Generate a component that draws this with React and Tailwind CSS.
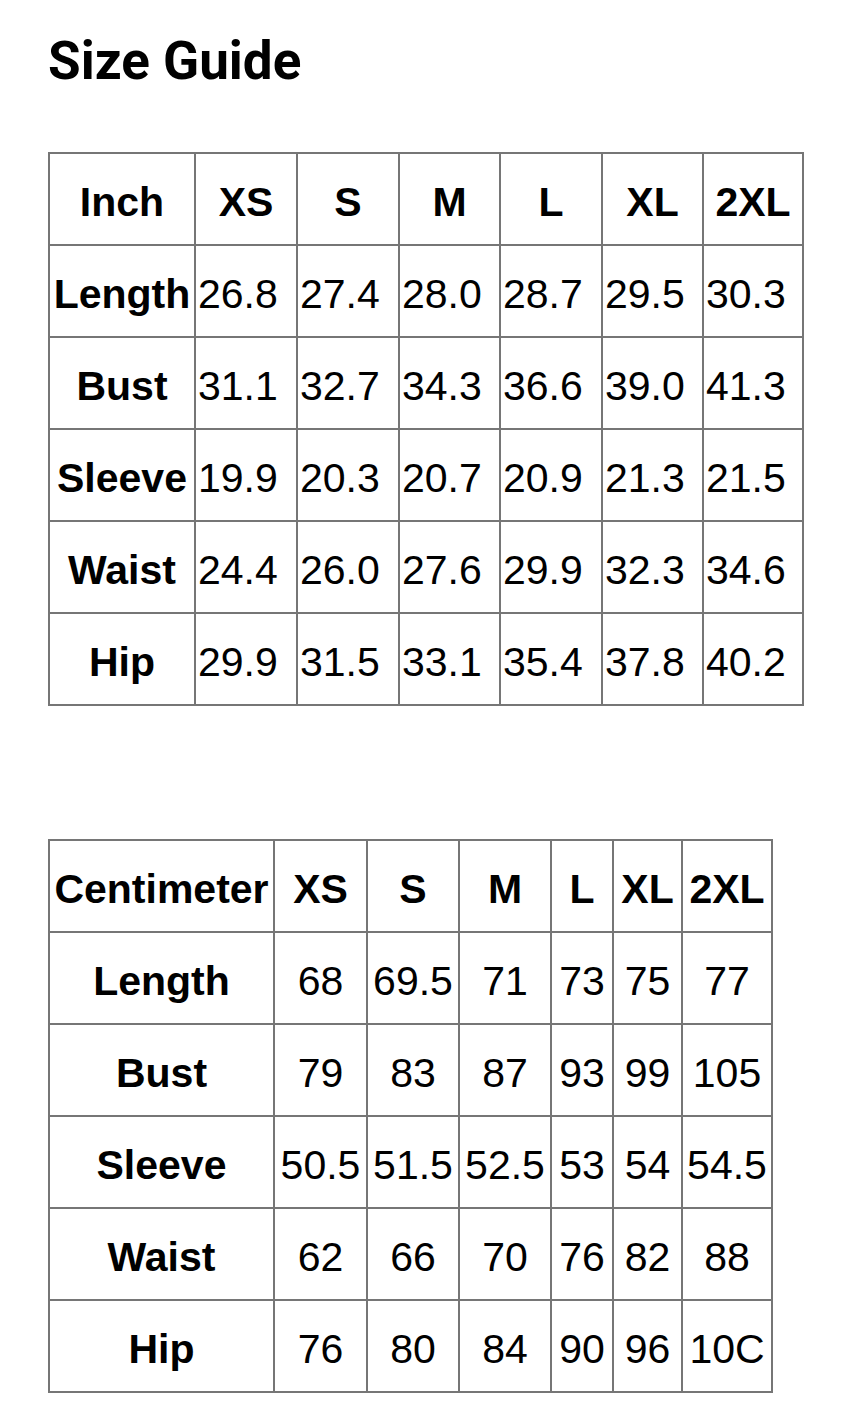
import React from 'react';

const inchSizes = ['XS', 'S', 'M', 'L', 'XL', '2XL'];
const inchRows = [
    ['Length', '26.8', '27.4', '28.0', '28.7', '29.5', '30.3'],
    ['Bust', '31.1', '32.7', '34.3', '36.6', '39.0', '41.3'],
    ['Sleeve', '19.9', '20.3', '20.7', '20.9', '21.3', '21.5'],
    ['Waist', '24.4', '26.0', '27.6', '29.9', '32.3', '34.6'],
    ['Hip', '29.9', '31.5', '33.1', '35.4', '37.8', '40.2'],
];

const cmRows = [
    ['Length', '68', '69.5', '71', '73', '75', '77'],
    ['Bust', '79', '83', '87', '93', '99', '105'],
    ['Sleeve', '50.5', '51.5', '52.5', '53', '54', '54.5'],
    ['Waist', '62', '66', '70', '76', '82', '88'],
    ['Hip', '76', '80', '84', '90', '96', '10C'],
];

const inchWidths = ['w-[146px]', 'w-[102px]', 'w-[102px]', 'w-[101px]', 'w-[102px]', 'w-[101px]', 'w-[100px]'];
const cmWidths = ['w-[225px]', 'w-[93px]', 'w-[92px]', 'w-[92px]', 'w-[62px]', 'w-[69px]', 'w-[90px]'];

const SizeTable = ({ unit, rows, widths, tableWidth, dataAlign }) => (
    <table className={`table-fixed border-separate border-spacing-0 border border-[#767676] ${tableWidth}`}>
        <thead>
            <tr className="h-[92px]">
                <th className={`border border-[#767676] p-0 pt-[6px] text-center font-bold ${widths[0]}`}>{unit}</th>
                {inchSizes.map((s, i) => (
                    <th key={s} className={`border border-[#767676] p-0 pt-[6px] text-center font-bold ${widths[i + 1]}`}>
                        {s}
                    </th>
                ))}
            </tr>
        </thead>
        <tbody>
            {rows.map((row) => (
                <tr key={row[0]} className="h-[92px]">
                    <th className="border border-[#767676] p-0 pt-[6px] text-center font-bold">{row[0]}</th>
                    {row.slice(1).map((v, i) => (
                        <td key={i} className={`border border-[#767676] p-0 pt-[6px] font-normal ${dataAlign}`}>
                            {v}
                        </td>
                    ))}
                </tr>
            ))}
        </tbody>
    </table>
);

const App = () => {
    return (
        <div className="min-h-[1425px] bg-white pl-[48px] pt-[35px] text-black">
            <h1 className="font-['Roboto',sans-serif] text-[53px] font-bold leading-none">Size Guide</h1>
            <div className="mt-[64px] font-['Liberation_Sans',Arial,sans-serif] text-[41px] leading-none">
                <SizeTable unit="Inch" rows={inchRows} widths={inchWidths} tableWidth="w-[756px]" dataAlign="text-left pl-[2px]" />
                <div className="h-[133px]" />
                <SizeTable unit="Centimeter" rows={cmRows} widths={cmWidths} tableWidth="w-[725px]" dataAlign="text-center" />
            </div>
        </div>
    );
};

export default App;
